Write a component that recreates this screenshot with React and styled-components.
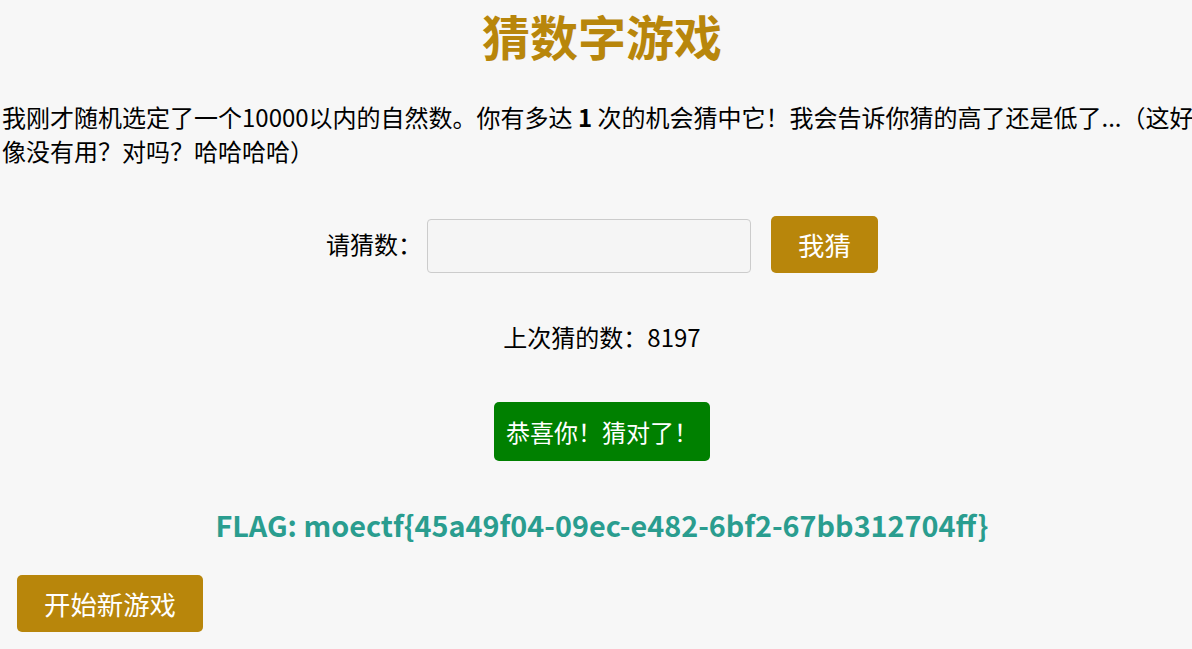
import React from 'react';
import styled, { createGlobalStyle } from 'styled-components';

const GlobalStyle = createGlobalStyle`
    body {
        margin: 0;
        background: #f7f7f7;
        font-family: "Noto Sans CJK SC", "Noto Sans", sans-serif;
        color: #000000;
        overflow-x: hidden;
    }
`;

const Page = styled.div`
    width: 1200px;
    padding-left: 2px;
`;

const Title = styled.h1`
    margin: 0;
    font-size: 48px;
    line-height: 70px;
    font-weight: 700;
    text-align: center;
    color: #b8860b;
`;

const Intro = styled.p`
    margin: 30px 0 0;
    font-size: 24px;
    line-height: 34px;
`;

const GuessForm = styled.form`
    margin-top: 47px;
    display: flex;
    align-items: center;
    justify-content: center;
`;

const Label = styled.label`
    font-size: 24px;
    line-height: 34px;
    margin-right: 5px;
`;

const NumberInput = styled.input`
    box-sizing: border-box;
    width: 324px;
    height: 54px;
    margin-top: 4px;
    border: 1px solid #cccccc;
    border-radius: 4px;
    background: #f5f5f5;
    font-size: 24px;
    font-family: inherit;
`;

const GoldButton = styled.button`
    margin-left: ${p => p.$offset || 0}px;
    padding: 11px 27px;
    border: none;
    border-radius: 5px;
    background: #b8860b;
    color: #ffffff;
    font-family: inherit;
    font-size: 26.4px;
    line-height: 35px;
    cursor: pointer;
`;

const LastGuess = styled.p`
    margin: 47px 0 0;
    text-align: center;
    font-size: 24px;
    line-height: 34px;
`;

const Center = styled.div`
    display: flex;
    justify-content: center;
    margin-top: 48px;
`;

const Success = styled.div`
    background: #008000;
    color: #ffffff;
    border-radius: 5px;
    padding: 12px 12px;
    font-size: 24px;
    line-height: 35px;
`;

const Flag = styled.p`
    margin: 44px 0 0;
    text-align: center;
    font-size: 28.8px;
    line-height: 40px;
    font-weight: 700;
    color: #2a9d8f;
`;

const Restart = styled.div`
    margin-top: 30px;
    padding-left: 15px;
`;

export default function App() {
    return (
        <Page>
            <GlobalStyle />
            <Title>猜数字游戏</Title>
            <Intro>
                我刚才随机选定了一个10000以内的自然数。你有多达 <b>1</b> 次的机会猜中它！我会告诉你猜的高了还是低了...（这好像没有用？对吗？哈哈哈哈）
            </Intro>
            <GuessForm onSubmit={e => e.preventDefault()}>
                <Label htmlFor="guess">请猜数：</Label>
                <NumberInput id="guess" type="text" />
                <GoldButton $offset={20} type="submit">我猜</GoldButton>
            </GuessForm>
            <LastGuess>上次猜的数：8197</LastGuess>
            <Center>
                <Success>恭喜你！猜对了！</Success>
            </Center>
            <Flag>FLAG: moectf&#123;45a49f04-09ec-e482-6bf2-67bb312704ff&#125;</Flag>
            <Restart>
                <GoldButton type="button">开始新游戏</GoldButton>
            </Restart>
        </Page>
    );
}
